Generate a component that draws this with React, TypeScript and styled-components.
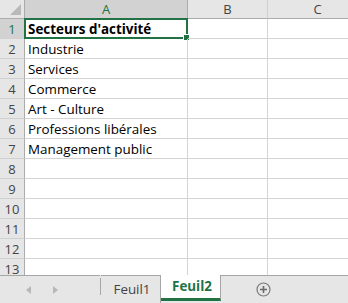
import React from 'react';
import styled, { createGlobalStyle } from 'styled-components';

const GlobalStyle = createGlobalStyle`
  html, body {
    margin: 0;
    padding: 0;
    background: #ffffff;
    overflow: hidden;
  }
`;

const Window = styled.div`
  width: 348px;
  height: 303px;
  display: flex;
  flex-direction: column;
  font-family: 'Open Sans', 'Liberation Sans', sans-serif;
  overflow: hidden;
`;

const Sheet = styled.div`
  flex: 1;
  overflow: hidden;
  display: grid;
  grid-template-columns: 25px 163px 80px 100px;
  grid-template-rows: 19px;
  grid-auto-rows: 20px;
`;

const Corner = styled.div`
  position: relative;
  background: #e6e6e6;
  border-right: 1px solid #ababab;
  border-bottom: 1px solid #ababab;
  box-sizing: border-box;

  &::after {
    content: '';
    position: absolute;
    right: 3px;
    bottom: 3px;
    width: 0;
    height: 0;
    border-left: 11px solid transparent;
    border-bottom: 11px solid #b9b9b9;
  }
`;

const ColHeader = styled.div<{ $active?: boolean }>`
  box-sizing: border-box;
  background: ${(p) => (p.$active ? '#d2d2d2' : '#e6e6e6')};
  color: ${(p) => (p.$active ? '#217346' : '#444444')};
  border-right: 1px solid ${(p) => (p.$active ? '#ababab' : '#d0d0d0')};
  border-bottom: 1px solid #ababab;
  font-size: 13px;
  line-height: 1;
  display: flex;
  align-items: center;
  justify-content: center;
`;

const RowHeader = styled.div<{ $active?: boolean }>`
  box-sizing: border-box;
  background: ${(p) => (p.$active ? '#d2d2d2' : '#e6e6e6')};
  color: ${(p) => (p.$active ? '#217346' : '#444444')};
  border-right: 1px solid #ababab;
  border-bottom: 1px solid #d0d0d0;
  font-size: 13px;
  line-height: 1;
  display: flex;
  align-items: center;
  justify-content: center;
  padding-top: 2px;
`;

const Cell = styled.div<{ $bold?: boolean }>`
  position: relative;
  box-sizing: border-box;
  border-right: 1px solid #d4d4d4;
  border-bottom: 1px solid #d4d4d4;
  font-size: 13.4px;
  line-height: 1;
  font-weight: ${(p) => (p.$bold ? 700 : 400)};
  color: #000000;
  white-space: nowrap;
  display: flex;
  align-items: center;
  padding: 2px 0 0 3px;
`;

const Selection = styled.div`
  position: absolute;
  left: -1px;
  top: -1px;
  right: -1px;
  bottom: -1px;
  border: 2px solid #217346;
  pointer-events: none;

  &::after {
    content: '';
    position: absolute;
    right: -4px;
    bottom: -4px;
    width: 5px;
    height: 5px;
    background: #217346;
    border: 1px solid #ffffff;
  }
`;

const TabBar = styled.div`
  height: 28px;
  flex-shrink: 0;
  box-sizing: border-box;
  background: #e6e6e6;
  display: flex;
  align-items: stretch;
  position: relative;
`;

const Nav = styled.div`
  width: 100px;
  display: flex;
  align-items: center;
  border-top: 1px solid #a6a6a6;
  box-sizing: border-box;
  padding-left: 26px;
  gap: 22px;
`;

const Arrow = styled.div<{ $dir: 'left' | 'right' }>`
  width: 0;
  height: 0;
  border-top: 4px solid transparent;
  border-bottom: 4px solid transparent;
  ${(p) =>
    p.$dir === 'left'
      ? 'border-right: 5px solid #b8b8b8;'
      : 'border-left: 5px solid #b8b8b8;'}
`;

const Separator = styled.div`
  width: 1px;
  margin: 3px 0 8px;
  background: #a6a6a6;
`;

const Tab = styled.div<{ $active?: boolean }>`
  width: 60px;
  box-sizing: border-box;
  display: flex;
  align-items: center;
  justify-content: center;
  font-size: 13.4px;
  padding: 0 0 2px 3px;
  background: ${(p) => (p.$active ? '#ffffff' : 'transparent')};
  color: ${(p) => (p.$active ? '#217346' : '#444444')};
  font-weight: ${(p) => (p.$active ? 700 : 400)};
  border-top: ${(p) => (p.$active ? 'none' : '1px solid #a6a6a6')};
  border-right: 1px solid #a6a6a6;
  border-bottom: ${(p) => (p.$active ? '3px solid #217346' : 'none')};
  margin-bottom: ${(p) => (p.$active ? '2px' : '0')};
`;

const Rest = styled.div`
  flex: 1;
  border-top: 1px solid #a6a6a6;
  display: flex;
  align-items: center;
  padding-left: 35px;
`;

const AddSheet = () => (
  <svg width="15" height="15" viewBox="0 0 15 15">
    <circle cx="7.5" cy="7.5" r="6.5" fill="none" stroke="#7a7a7a" strokeWidth="1.2" />
    <path d="M7.5 4v7M4 7.5h7" stroke="#6a6a6a" strokeWidth="1.6" />
  </svg>
);

const values = [
  "Secteurs d'activité",
  'Industrie',
  'Services',
  'Commerce',
  'Art - Culture',
  'Professions libérales',
  'Management public',
];

const App = () => {
  const rows = Array.from({ length: 13 }, (_, i) => i + 1);
  return (
    <Window>
      <GlobalStyle />
      <Sheet>
        <Corner />
        <ColHeader $active>A</ColHeader>
        <ColHeader>B</ColHeader>
        <ColHeader>C</ColHeader>
        {rows.map((r) => (
          <React.Fragment key={r}>
            <RowHeader $active={r === 1}>{r}</RowHeader>
            <Cell $bold={r === 1}>
              {values[r - 1]}
              {r === 1 && <Selection />}
            </Cell>
            <Cell />
            <Cell />
          </React.Fragment>
        ))}
      </Sheet>
      <TabBar>
        <Nav>
          <Arrow $dir="left" />
          <Arrow $dir="right" />
        </Nav>
        <Separator />
        <Tab>Feuil1</Tab>
        <Tab $active>Feuil2</Tab>
        <Rest>
          <AddSheet />
        </Rest>
      </TabBar>
    </Window>
  );
};

export default App;
